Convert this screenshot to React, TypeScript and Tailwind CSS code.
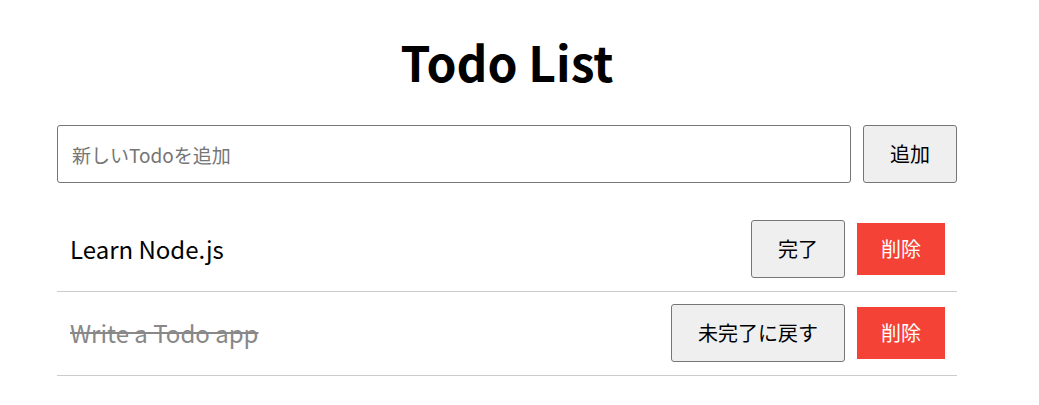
const todos = [
  { id: 1, text: 'Learn Node.js', done: false },
  { id: 2, text: 'Write a Todo app', done: true },
];

export default function App() {
  return (
    <div
      className="min-h-screen bg-white text-black"
      style={{ fontFamily: '"Noto Sans CJK JP", "Noto Sans", sans-serif' }}
    >
      <div className="ml-[57px] w-[900px] pt-[26px]">
        <h1 className="text-center text-[48px] font-bold leading-[70px] mb-[29px]">Todo List</h1>

        {/* Add form */}
        <div className="flex gap-3 mb-[25px]">
          <input
            type="text"
            placeholder="新しいTodoを追加"
            className="flex-1 h-[58px] border border-[#767676] rounded-[3px] pl-[14px] text-[19px] placeholder:text-[#757575] outline-none"
          />
          <button className="w-[94px] h-[58px] border border-[#767676] rounded-[3px] bg-[#efefef] text-[20px]">
            追加
          </button>
        </div>

        {/* Todo items */}
        <ul>
          {todos.map((todo) => (
            <li
              key={todo.id}
              className="flex items-center justify-between pt-3 pb-[13px] pl-[13px] pr-3 border-b border-[#cccccc]"
            >
              <span
                className={
                  todo.done
                    ? 'text-[24px] text-[#888888] line-through'
                    : 'text-[24px] text-black'
                }
              >
                {todo.text}
              </span>
              <div className="flex items-center gap-3">
                <button className="border border-[#767676] rounded-[3px] bg-[#efefef] px-[26px] py-[13px] text-[20px] leading-[30px]">
                  {todo.done ? '未完了に戻す' : '完了'}
                </button>
                <button className="bg-[#f44336] text-white px-6 py-[11px] text-[20px] leading-[30px]">
                  削除
                </button>
              </div>
            </li>
          ))}
        </ul>
      </div>
    </div>
  );
}
